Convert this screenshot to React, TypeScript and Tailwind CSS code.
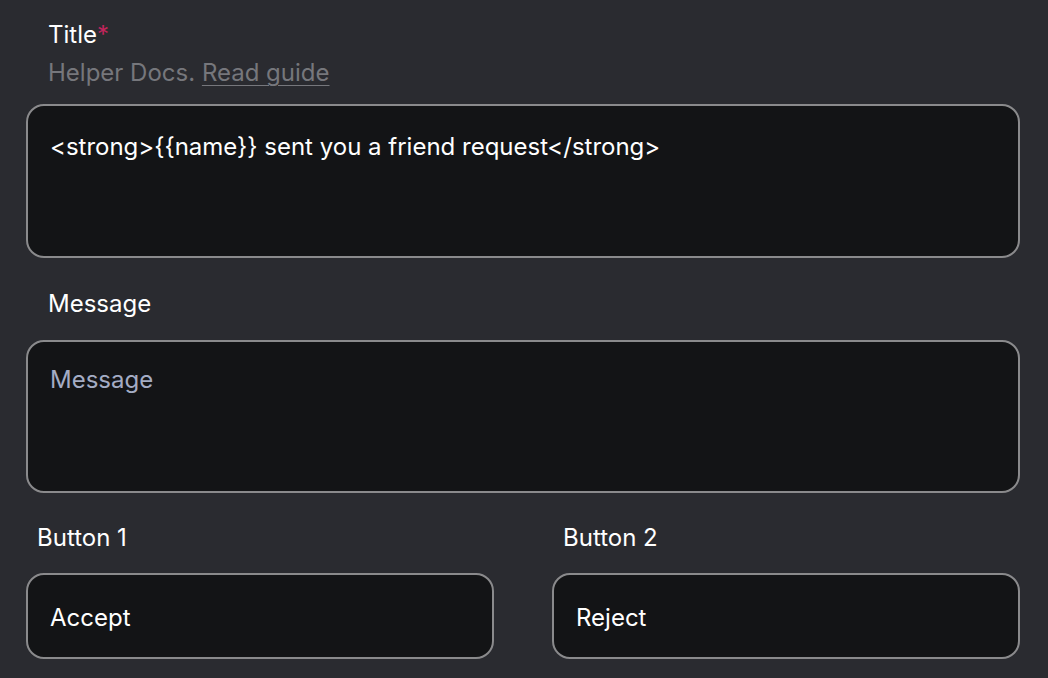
import React from "react";

export default function App() {
  const font = { fontFamily: "Inter, 'Noto Sans', sans-serif" };
  return (
    <div
      className="w-[1048px] h-[678px] overflow-hidden bg-[#2a2b30] text-white pl-[26px] pr-[28px] pt-[19px]"
      style={font}
    >
      <div className="flex flex-col">
        <div className="pl-[22px]">
          <div className="text-[24px] leading-[32px] text-white">
            Title<span className="text-[#c2255c]">*</span>
          </div>
          <div className="text-[24px] leading-[32px] mt-[6px] text-[#76777c]">
            Helper Docs.{" "}
            <span className="underline underline-offset-4 decoration-1">Read guide</span>
          </div>
        </div>
        <textarea
          readOnly
          className="mt-[15px] h-[154px] w-full resize-none rounded-[18px] border-2 border-[#8a8a8c] bg-[#131416] px-[22px] pt-[25px] text-[24px] leading-[32px] text-white outline-none"
          style={font}
          value="<strong>{{name}} sent you a friend request</strong>"
        />
        <div className="pl-[22px] mt-[30px] text-[24px] leading-[32px] text-white">Message</div>
        <textarea
          readOnly
          className="mt-[20px] h-[153px] w-full resize-none rounded-[18px] border-2 border-[#8a8a8c] bg-[#131416] px-[22px] pt-[22px] text-[24px] leading-[32px] text-white outline-none placeholder:text-[#a4acc4]"
          style={font}
          placeholder="Message"
        />
        <div className="mt-[29px] grid grid-cols-2 gap-[58px]">
          <div className="flex flex-col">
            <div className="pl-[11px] text-[24px] leading-[32px] text-white">Button 1</div>
            <input
              readOnly
              className="mt-[19px] h-[86px] w-full rounded-[18px] border-2 border-[#8a8a8c] bg-[#131416] px-[22px] pt-[2px] text-[24px] text-white outline-none"
              style={font}
              value="Accept"
            />
          </div>
          <div className="flex flex-col">
            <div className="pl-[11px] text-[24px] leading-[32px] text-white">Button 2</div>
            <input
              readOnly
              className="mt-[19px] h-[86px] w-full rounded-[18px] border-2 border-[#8a8a8c] bg-[#131416] px-[22px] pt-[2px] text-[24px] text-white outline-none"
              style={font}
              value="Reject"
            />
          </div>
        </div>
      </div>
    </div>
  );
}
